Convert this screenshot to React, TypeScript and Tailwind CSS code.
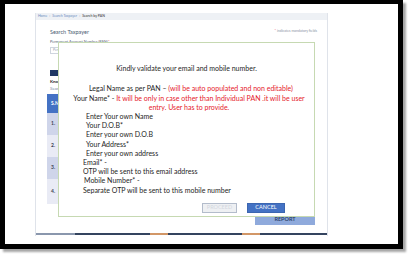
import React from "react";

const rows = [
  { n: "1.", bg: "bg-[#cfd5ea]", h: "h-[22px]" },
  { n: "2.", bg: "bg-[#e9ebf5]", h: "h-[22px]" },
  { n: "3.", bg: "bg-[#cfd5ea]", h: "h-[22px]" },
  { n: "4.", bg: "bg-[#e9ebf5]", h: "h-[25px]" },
];

function Modal() {
  return (
    <div className="absolute left-[22px] top-[29px] w-[257px] h-[175px] bg-white border border-[#c6d9b2] text-[7px] leading-[9.2px] text-[#1e1e1e]">
      <p className="pt-[21.4px] text-center whitespace-nowrap">Kindly validate your email and mobile number.</p>

      <div className="mt-[10.8px] pl-[14px] pr-[9px] text-center whitespace-nowrap">
        <p className="pl-[4px]">
          Legal Name as per PAN – <span className="text-[#e5202b]">(will be auto populated and non editable)</span>
        </p>
        <p>
          Your Name* - <span className="text-[#e5202b]">It will be only in case other than Individual PAN .it will be user</span>
        </p>
        <p className="text-[#e5202b]">entry. User has to provide.</p>
      </div>

      <div className="pl-[27px] whitespace-nowrap">
        <p>Enter Your own Name</p>
        <p>Your D.O.B*</p>
        <p>Enter your own D.O.B</p>
        <p>Your Address*</p>
        <p>Enter your own address</p>
      </div>
      <div className="pl-[24px] whitespace-nowrap">
        <p>Email* -</p>
        <p>OTP will be sent to this email address</p>
        <p className="pl-[1px]">Mobile Number* -</p>
        <p>Separate OTP will be sent to this mobile number</p>
      </div>

      <div className="mt-[8.2px] flex justify-end gap-[10px] pr-[29px]">
        <button className="w-[35px] h-[10px] bg-[#eef0f3] border border-[#b3bccb] text-[5.5px] leading-none text-[#d3d7de] flex items-center justify-center">
          PROCEED
        </button>
        <button className="w-[38px] h-[10px] bg-[#4472c4] border border-[#3c66b0] text-[5.5px] leading-none text-white flex items-center justify-center">
          CANCEL
        </button>
      </div>
    </div>
  );
}

export default function App() {
  return (
    <div className="w-[410px] h-[255px] bg-white font-['Lato','Liberation_Sans',sans-serif]">
      <div className="w-[403px] h-[249px] bg-white border-[5px] border-t-4 border-black shadow-[3px_3px_2px_rgba(0,0,0,0.35)] pt-[9px] pl-[30px]">
        {/* page behind the popup */}
        <div className="relative w-[293px] h-[223px] border-x border-[#dfe3ea] flex flex-col">
          <div className="h-[7px] bg-[#eef1f5] flex items-center gap-[2px] px-[2px] text-[3.5px] leading-none">
            <span className="text-[#6b8cc0]">Home</span>
            <span className="text-[#9aa5b5]">›</span>
            <span className="text-[#6b8cc0]">Search Taxpayer</span>
            <span className="text-[#9aa5b5]">›</span>
            <span className="text-[#333]">Search by PAN</span>
          </div>

          <div className="mt-[9px] pl-[14px] pr-[10px] flex justify-between items-start">
            <span className="text-[5.5px] leading-[6px] text-[#4b5b72]">Search Taxpayer</span>
            <span className="text-[3.5px] leading-[4px] text-[#8a93a3]">
              <span className="text-[#e5202b]">*</span> indicates mandatory fields
            </span>
          </div>

          <p className="mt-[3.5px] pl-[14px] text-[3.8px] leading-[5px] text-[#5a6578]">
            Permanent Account Number (PAN)<span className="text-[#e5202b]">*</span>
          </p>
          <div className="mt-[3.5px] ml-[14px] w-[110px] h-[7px] border border-[#cfd5de] flex items-center pl-[2px] text-[3.5px] text-[#9aa3b0]">
            Permanent Account Number
          </div>

          <div className="mt-[16px] ml-[14px] w-[40px] h-[6px] bg-[#1f3864]" />
          <p className="mt-[3px] pl-[14px] text-[4.5px] leading-[6px] font-bold text-[#222]">Know Your PAN Status</p>
          <p className="mt-[1px] pl-[14px] text-[4.5px] leading-[6px] text-[#7d8ca3]">Search Result</p>

          <div className="mt-[2px] ml-[11px] w-[268px] text-[5px]">
            <div className="h-[19px] bg-[#4472c4] flex items-center pl-[4px] text-white font-bold">S.No.</div>
            {rows.map((r) => (
              <div key={r.n} className={`${r.h} ${r.bg} flex items-center pl-[4px] font-bold text-[#3a4252]`}>
                {r.n}
              </div>
            ))}
          </div>

          <div className="mt-[11px] flex justify-end pr-[12px]">
            <div className="w-[60px] h-[10px] bg-[#8faadc] flex items-center justify-center text-[5.5px] leading-none font-semibold text-[#1f3864]">
              REPORT
            </div>
          </div>

          <div className="mt-auto mb-[1px] flex h-[2px]">
            <div className="w-[39px] bg-[#8a97ad]" />
            <div className="w-[75px] bg-[#34445f]" />
            <div className="w-[18px] bg-[#d29767]" />
            <div className="w-[74px] bg-[#34445f]" />
            <div className="w-[18px] bg-[#d29767]" />
            <div className="flex-1 bg-[#34445f]" />
          </div>

          <Modal />
        </div>
      </div>
    </div>
  );
}
